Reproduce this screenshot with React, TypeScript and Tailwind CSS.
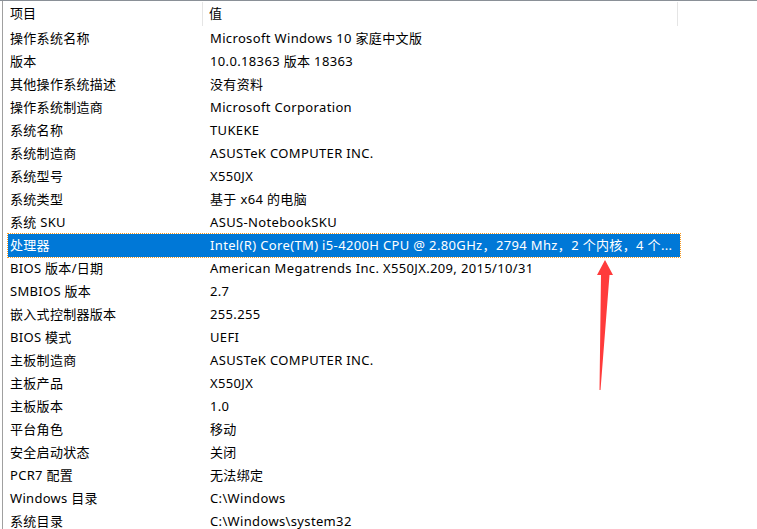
const rows: [string, string][] = [
  ['操作系统名称', 'Microsoft Windows 10 家庭中文版'],
  ['版本', '10.0.18363 版本 18363'],
  ['其他操作系统描述', '没有资料'],
  ['操作系统制造商', 'Microsoft Corporation'],
  ['系统名称', 'TUKEKE'],
  ['系统制造商', 'ASUSTeK COMPUTER INC.'],
  ['系统型号', 'X550JX'],
  ['系统类型', '基于 x64 的电脑'],
  ['系统 SKU', 'ASUS-NotebookSKU'],
  ['处理器', 'Intel(R) Core(TM) i5-4200H CPU @ 2.80GHz，2794 Mhz，2 个内核，4 个...'],
  ['BIOS 版本/日期', 'American Megatrends Inc. X550JX.209, 2015/10/31'],
  ['SMBIOS 版本', '2.7'],
  ['嵌入式控制器版本', '255.255'],
  ['BIOS 模式', 'UEFI'],
  ['主板制造商', 'ASUSTeK COMPUTER INC.'],
  ['主板产品', 'X550JX'],
  ['主板版本', '1.0'],
  ['平台角色', '移动'],
  ['安全启动状态', '关闭'],
  ['PCR7 配置', '无法绑定'],
  ['Windows 目录', 'C:\\Windows'],
  ['系统目录', 'C:\\Windows\\system32'],
];

export default function App() {
  return (
    <div className="relative w-[757px] h-[529px] overflow-hidden bg-white border-t border-[#8a9097] text-[13px] text-black font-['Noto_Sans','Noto_Sans_CJK_SC',sans-serif]">
      <div className="ml-[2px] h-full border-l border-[#a0a0a0]">
        {/* header */}
        <div className="flex h-[26px] items-center">
          <div className="w-[200px] pl-[7px] h-[24px] flex items-center border-r border-[#e5e5e5]">项目</div>
          <div className="w-[475px] pl-[6px] h-[24px] flex items-center border-r border-[#e5e5e5] tracking-[0.35px]">值</div>
        </div>

        {/* rows */}
        {rows.map(([k, v], i) => {
          const sel = i === 9;
          return (
            <div
              key={k}
              className={
                sel
                  ? 'flex items-center h-[23px] ml-[5px] w-[672px] bg-[#0078d7] text-white outline outline-1 outline-dotted outline-[#f59a23]'
                  : 'flex items-center h-[23px] ml-[5px] w-[672px]'
              }
            >
              <div className="w-[197px] pl-[2px] whitespace-nowrap tracking-[0.3px]">{k}</div>
              <div className="pl-[5px] whitespace-nowrap tracking-[0.35px]">{v}</div>
            </div>
          );
        })}
      </div>

      {/* red arrow */}
      <svg className="absolute left-[590px] top-[255px]" width="30" height="140" viewBox="0 0 30 140">
        <path d="M15 4 L23 19 L19.5 19 L10.5 134 L9.5 134 L11 19 L7 19 Z" fill="#ff3b3b" />
      </svg>
    </div>
  );
}
